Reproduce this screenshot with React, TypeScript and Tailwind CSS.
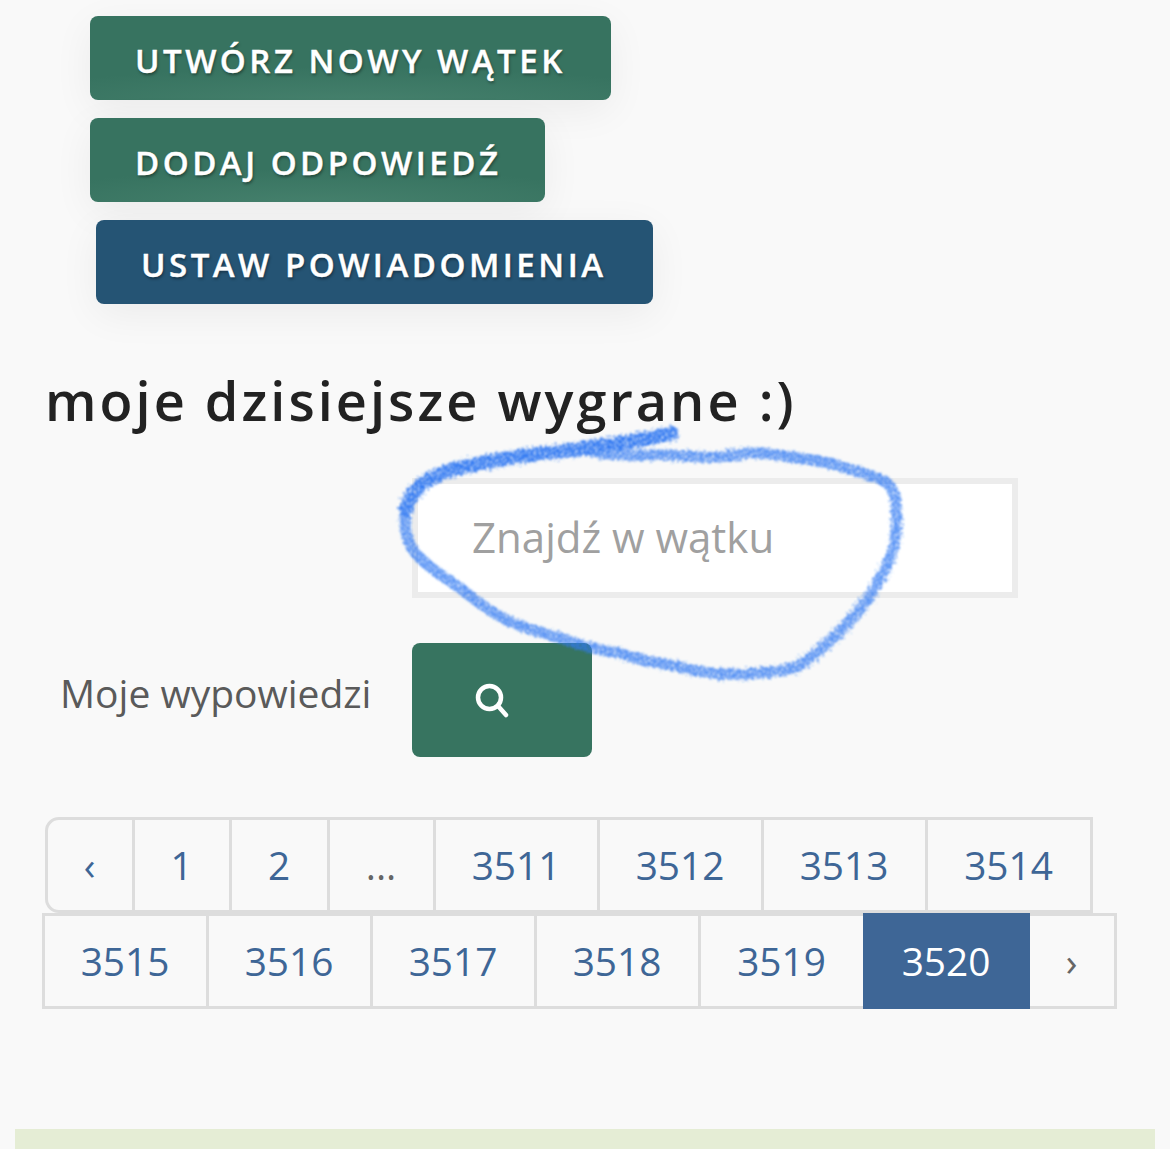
const font = { fontFamily: '"Open Sans", sans-serif' }

const row1 = [
  { label: '‹', w: 'w-[90px]', kind: 'first' },
  { label: '1', w: 'w-[100px]' },
  { label: '2', w: 'w-[101px]' },
  { label: '...', w: 'w-[109px]', kind: 'gap' },
  { label: '3511', w: 'w-[167px]' },
  { label: '3512', w: 'w-[167px]' },
  { label: '3513', w: 'w-[167px]' },
  { label: '3514', w: 'w-[168px]' },
]

const row2 = [
  { label: '3515', w: 'w-[167px]' },
  { label: '3516', w: 'w-[167px]' },
  { label: '3517', w: 'w-[167px]' },
  { label: '3518', w: 'w-[167px]' },
  { label: '3519', w: 'w-[168px]' },
  { label: '3520', w: 'w-[167px]', kind: 'active' },
  { label: '›', w: 'w-[90px]', kind: 'next' },
]

function PageCell({ label, w, kind }: { label: string; w: string; kind?: string }) {
  let tone = 'border-[#dddddd] text-[#3e6696]'
  if (kind === 'active') tone = 'relative z-10 border-[#3e6696] bg-[#3e6696] text-white'
  if (kind === 'gap' || kind === 'next') tone = 'border-[#dddddd] text-[#666666]'
  if (kind === 'first') tone = 'rounded-l-[14px] border-[#dddddd] text-[#3e6696]'
  return (
    <div className={`-ml-[3px] flex h-full shrink-0 items-center justify-center border-[3px] pr-[1px] pt-[1px] text-[38.8px] first:ml-0 ${w} ${tone}`}>
      {label}
    </div>
  )
}

function ActionButton({ label, tone, width }: { label: string; tone: string; width: string }) {
  return (
    <button
      className={`flex h-[84px] items-center rounded-[8px] pl-[45px] pt-[6px] text-[33px] font-semibold tracking-[3.5px] text-white shadow-[0_10px_40px_rgba(0,0,0,0.06)] [-webkit-text-stroke:0.4px_white] [text-shadow:1px_2px_3px_rgba(0,0,0,0.4)] ${tone} ${width}`}
    >
      {label}
    </button>
  )
}

function Scribble() {
  return (
    <svg className="pointer-events-none absolute left-0 top-0 z-20" width="1170" height="1149" viewBox="0 0 1170 1149" fill="none">
      <defs>
        <filter id="crayon" x="-5%" y="-5%" width="110%" height="110%">
          <feTurbulence type="fractalNoise" baseFrequency="0.4" numOctaves="2" seed="4" result="noise" />
          <feDisplacementMap in="SourceGraphic" in2="noise" scale="10" result="rough" />
          <feTurbulence type="fractalNoise" baseFrequency="0.55" numOctaves="2" seed="9" result="fine" />
          <feColorMatrix in="fine" type="matrix" values="0 0 0 0 0  0 0 0 0 0  0 0 0 0 0  3.4 0 0 0 -0.8" result="grain" />
          <feComposite in="rough" in2="grain" operator="in" result="grainy" />
          <feGaussianBlur in="grainy" stdDeviation="0.8" />
        </filter>
      </defs>
      <g filter="url(#crayon)" stroke="#3079f2" strokeLinecap="round" strokeLinejoin="round">
        <path
          strokeWidth="11"
          strokeOpacity="0.8"
          d="M851 470C830 462 815 460 798 458C780 456 765 452 749 453C730 456 715 458 700 457C680 456 665 454 651 455C630 456 610 454 594 453M406 510C403 530 408 546 419 557C432 570 445 578 459 587C475 600 490 612 510 622C530 630 545 634 561 638C580 646 600 650 619 653C640 660 655 663 676 666C700 672 720 676 745 674C770 672 785 672 800 665C815 655 828 642 839 633C852 618 864 606 872 593C880 578 888 566 892 553C896 540 898 525 896 510C896 495 893 488 886 482C870 474 860 472 851 470"
        />
        <path strokeWidth="14" d="M672 433C650 440 610 444 574 450C530 454 490 460 451 470C425 478 410 492 406 510" />
      </g>
    </svg>
  )
}

export default function App() {
  return (
    <div className="relative h-[1149px] overflow-hidden bg-[#f9f9f9] pt-[16px]" style={font}>
      {/* buttons */}
      <div className="flex flex-col items-start gap-[18px] pl-[90px]">
        <ActionButton label="UTWÓRZ NOWY WĄTEK" width="w-[521px]" tone="bg-[radial-gradient(ellipse_70%_45%_at_50%_105%,#46816d_0%,#377360_100%)]" />
        <ActionButton label="DODAJ ODPOWIEDŹ" width="w-[455px]" tone="bg-[radial-gradient(ellipse_70%_45%_at_50%_105%,#46816d_0%,#377360_100%)]" />
        <ActionButton label="USTAW POWIADOMIENIA" width="ml-[6px] w-[557px]" tone="bg-[#255474]" />
      </div>

      <h1 className="mt-[56px] pl-[45px] text-[54px] leading-[80px] font-semibold tracking-[3.03px] text-[#222222]">
        moje dzisiejsze wygrane :)
      </h1>

      {/* search */}
      <div className="mt-[38px] ml-[412px] flex h-[120px] w-[606px] items-center border-[6px] border-[#ececec] bg-white pb-[4px] pl-[54px] text-[42px] text-[#a0a0a0]">
        Znajdź w wątku
      </div>
      <div className="mt-[45px] flex items-start">
        <label className="w-[412px] pl-[60px] pt-[25px] text-[39px] leading-[50px] text-[#5a5a5a]">Moje wypowiedzi</label>
        <button className="flex h-[114px] w-[180px] items-center rounded-[8px] bg-[#377460] pl-[62px]">
          <svg width="36" height="36" viewBox="0 0 36 36" fill="none" stroke="white" strokeWidth="4.5" strokeLinecap="round">
            <circle cx="15.5" cy="15.5" r="11.5" />
            <path d="M24 24L32 33" />
          </svg>
        </button>
      </div>

      {/* pagination */}
      <div className="mt-[60px] flex h-[96px] pl-[45px]">
        {row1.map((p) => (
          <PageCell key={p.label} {...p} />
        ))}
      </div>
      <div className="flex h-[96px] pl-[42px]">
        {row2.map((p) => (
          <PageCell key={p.label} {...p} />
        ))}
      </div>

      <div className="mx-[15px] mt-[120px] h-[20px] bg-[#e5edd5]" />

      <Scribble />
    </div>
  )
}
